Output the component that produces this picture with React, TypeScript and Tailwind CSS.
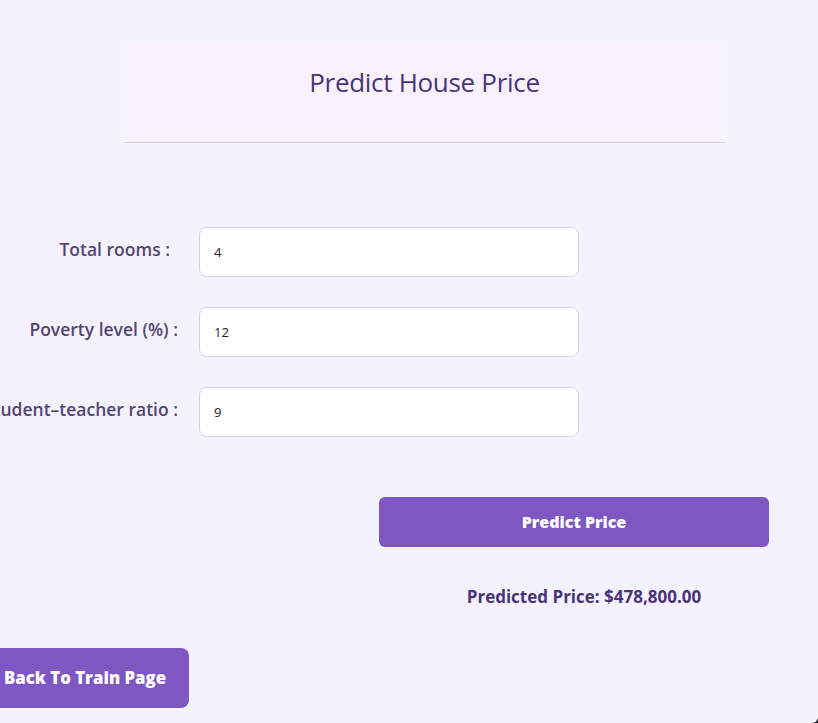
import { useState } from 'react'

const fields = [
  { label: 'Total rooms :', value: '4', pad: 'pr-[29px]' },
  { label: 'Poverty level (%) :', value: '12', pad: 'pr-[21px]' },
  { label: 'Student–teacher ratio :', value: '9', pad: 'pr-[21px]' },
]

export default function App() {
  const [values, setValues] = useState(fields.map((f) => f.value))

  return (
    <div className="w-[818px] h-[723px] bg-[#1c1c24]">
      <div
        className="w-[818px] h-[723px] overflow-hidden rounded-br-[6px] bg-[#f4f2fe] text-[#554670]"
        style={{ fontFamily: '"Open Sans", "Noto Sans", sans-serif' }}
      >
        {/* Header */}
        <div className="pt-[42px]">
          <div className="ml-[124px] w-[601px] h-[101px] flex justify-center pt-[22px] bg-[#f9f2fe] border-b border-[#d9d1e9]">
            <h1 className="text-[26px] leading-[36px] font-medium text-[#4a3478] tracking-[-0.3px]">
              Predict House Price
            </h1>
          </div>
        </div>

        {/* Form */}
        <div className="mt-[84px] flex flex-col gap-[30px]">
          {fields.map((f, i) => (
            <div key={f.label} className="flex items-center">
              <label
                className={`w-[199px] shrink-0 flex justify-end whitespace-nowrap text-[17.5px] font-semibold mb-[6px] ${f.pad}`}
              >
                {f.label}
              </label>
              <input
                value={values[i]}
                onChange={(e) =>
                  setValues(values.map((v, j) => (j === i ? e.target.value : v)))
                }
                className="w-[380px] h-[50px] rounded-[8px] border border-[#d6d1e8] bg-white pl-[14px] text-[13px] text-[#222] outline-none"
              />
            </div>
          ))}
        </div>

        <div className="mt-[60px] ml-[379px]">
          <button className="w-[390px] h-[50px] rounded-[6px] bg-[#7e57c2] text-white text-[16px] font-extrabold">
            Predict Price
          </button>
        </div>

        <p className="mt-[37px] ml-[379px] w-[410px] text-center text-[17px] font-bold text-[#4a3478]">
          Predicted Price: $478,800.00
        </p>

        <div className="mt-[38px]">
          <button className="ml-[-20px] h-[60px] rounded-[8px] bg-[#7e57c2] pl-[24px] pr-[23px] text-white text-[16.8px] font-extrabold">
            Back To Train Page
          </button>
        </div>
      </div>
    </div>
  )
}
